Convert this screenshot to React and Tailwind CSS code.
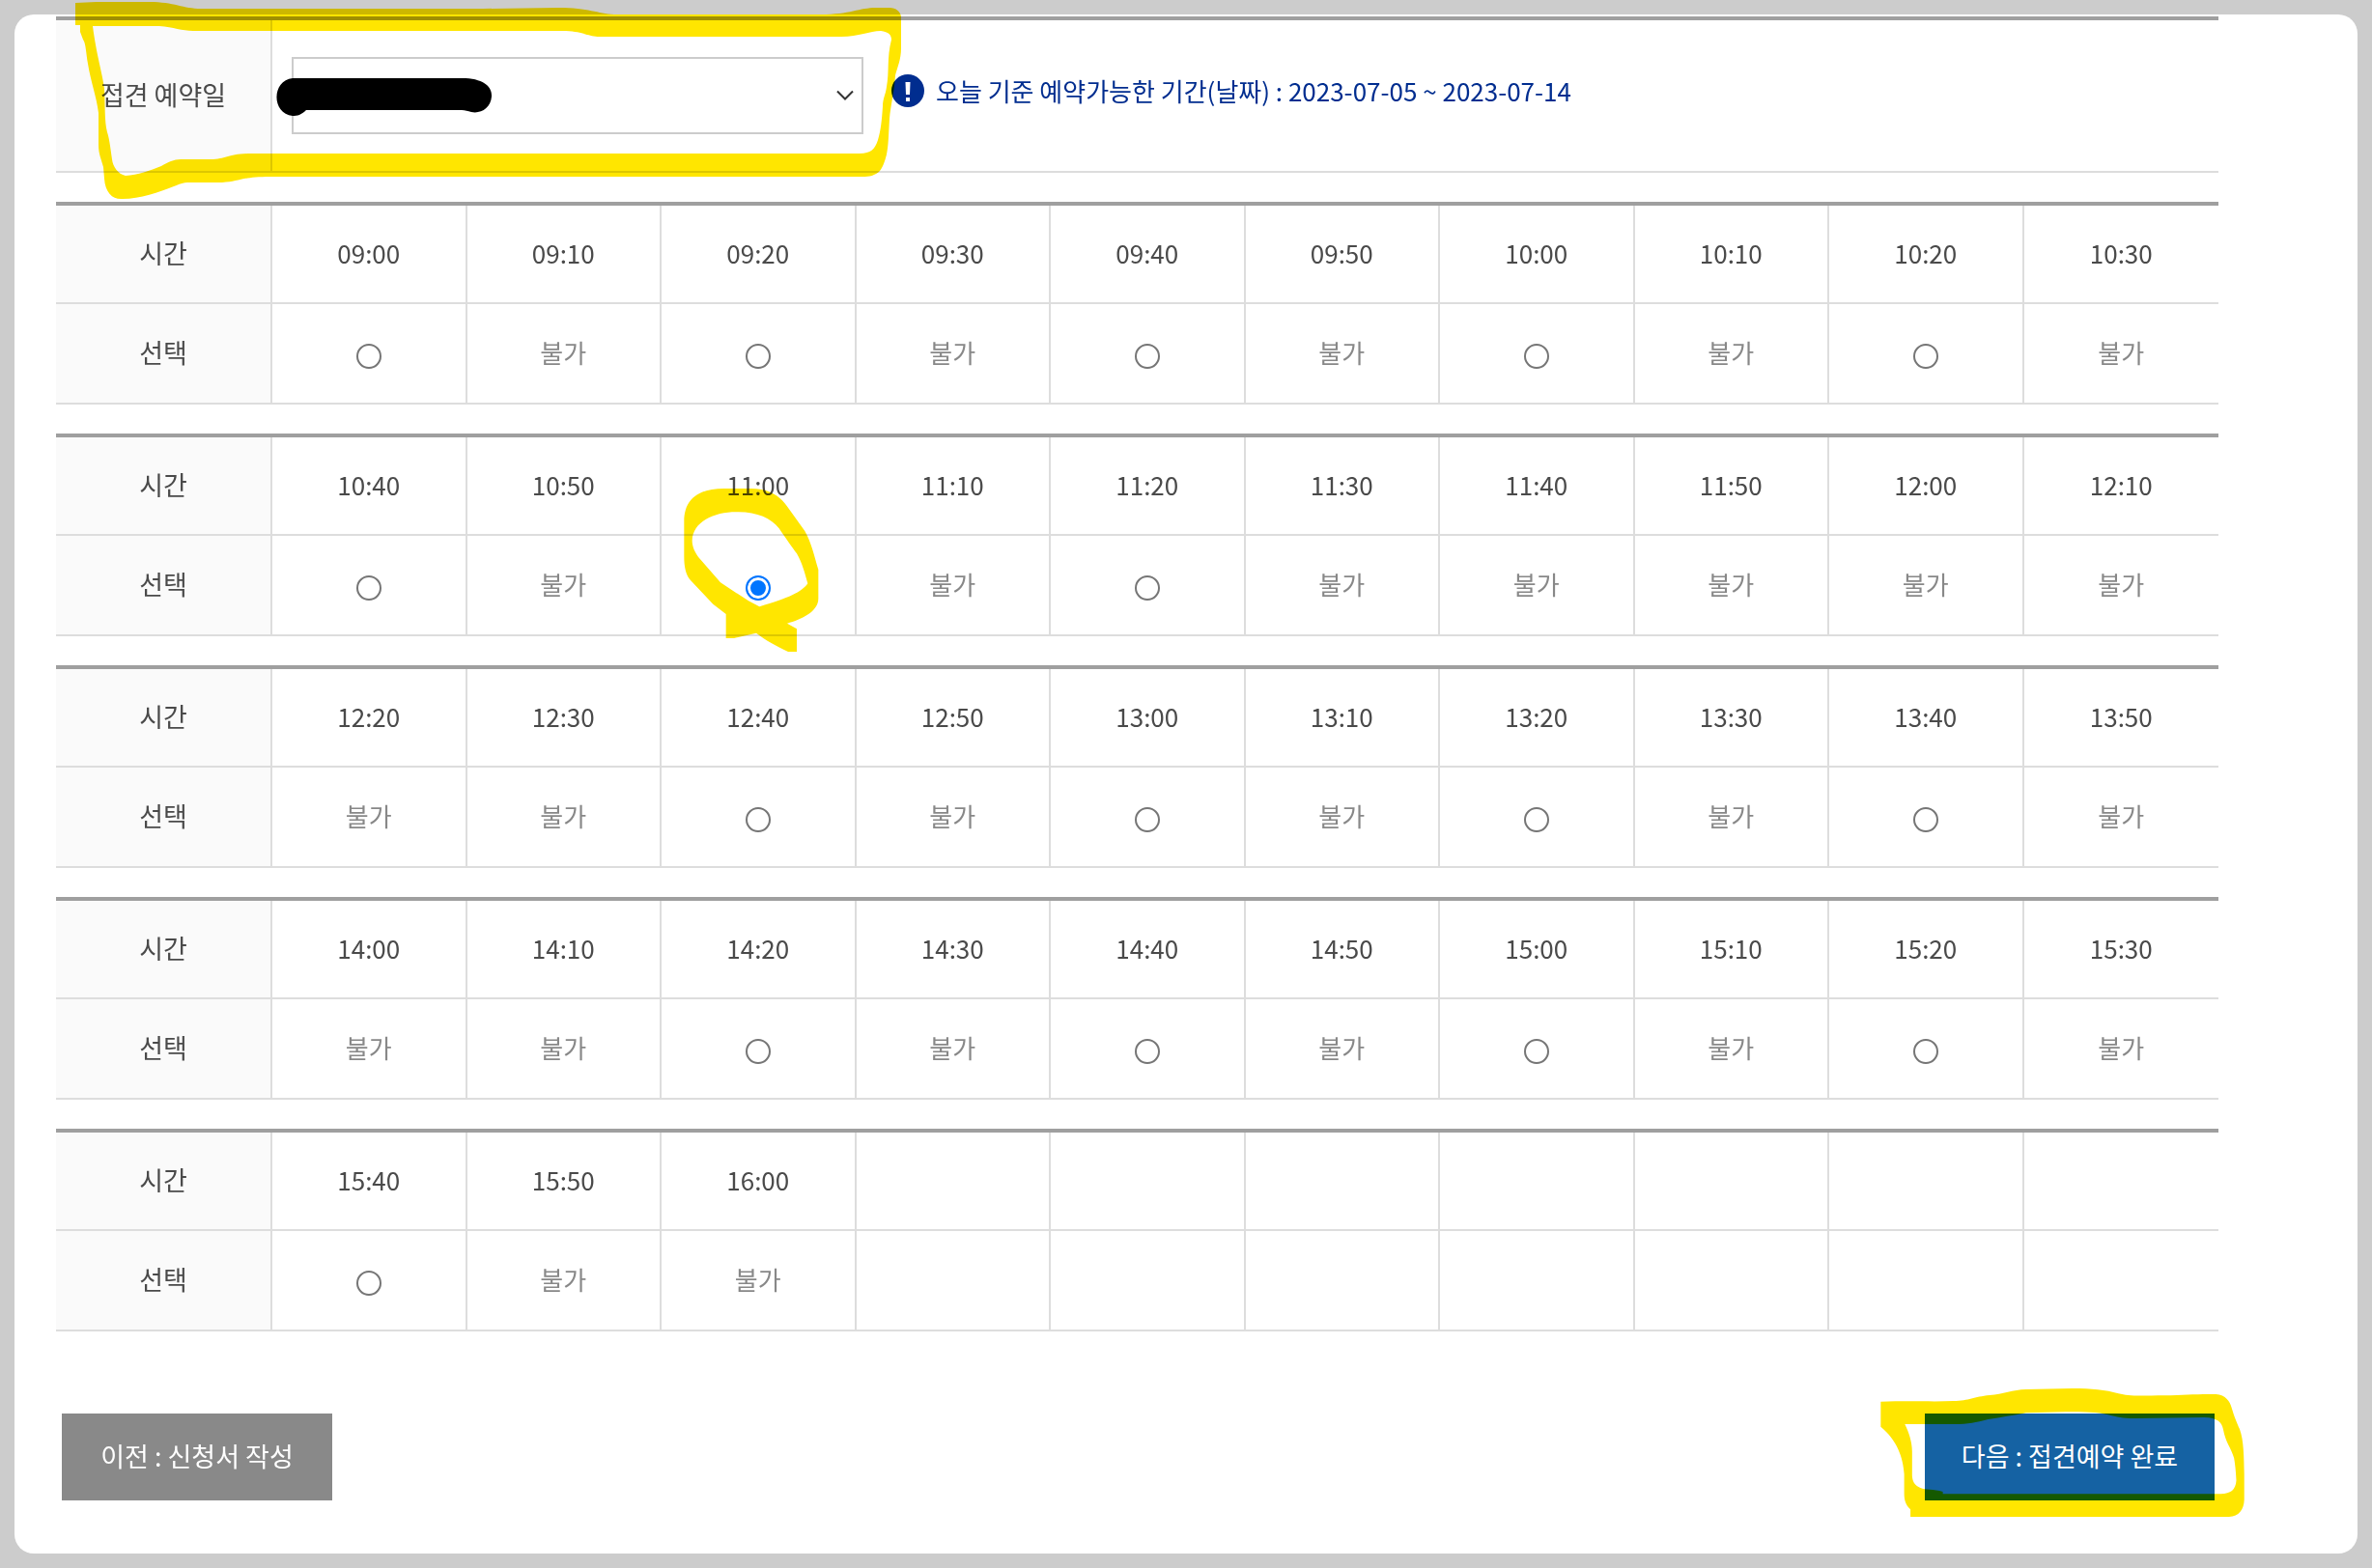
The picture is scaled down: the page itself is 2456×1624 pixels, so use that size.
import React, { useState } from 'react';

// Each group is one table: [time, can be booked]
const timeGroups = [
    [
        ['09:00', true], ['09:10', false], ['09:20', true], ['09:30', false], ['09:40', true],
        ['09:50', false], ['10:00', true], ['10:10', false], ['10:20', true], ['10:30', false],
    ],
    [
        ['10:40', true], ['10:50', false], ['11:00', true], ['11:10', false], ['11:20', true],
        ['11:30', false], ['11:40', false], ['11:50', false], ['12:00', false], ['12:10', false],
    ],
    [
        ['12:20', false], ['12:30', false], ['12:40', true], ['12:50', false], ['13:00', true],
        ['13:10', false], ['13:20', true], ['13:30', false], ['13:40', true], ['13:50', false],
    ],
    [
        ['14:00', false], ['14:10', false], ['14:20', true], ['14:30', false], ['14:40', true],
        ['14:50', false], ['15:00', true], ['15:10', false], ['15:20', true], ['15:30', false],
    ],
    [
        ['15:40', true], ['15:50', false], ['16:00', false],
        null, null, null, null, null, null, null,
    ],
];

const dates = ['2023-07-05', '2023-07-06', '2023-07-07', '2023-07-10', '2023-07-11', '2023-07-12', '2023-07-13', '2023-07-14'];

const MARKED_TIME = '11:00';

// Yellow marker strokes
const DateMarker = () => (
    <svg
        viewBox="70 0 870 210"
        aria-hidden="true"
        className="absolute left-3 -top-[17px] w-[870px] h-[210px] max-w-none mix-blend-multiply pointer-events-none"
    >
        <path
            fill="#ffe600"
            fillRule="evenodd"
            d="M78 3 L100 2 H155 C180 2 190 9 208 9 L500 9 L578 8 C610 8 618 14 636 15 H850 C880 15 890 8 907 8 H921 C928 8 932 12 933 17 V50 C933 62 929 70 927 78 C926 95 922 110 921 123 C920 140 920 150 918 160 C916 168 914 173 911 177 C906 182 900 183 893 183 H280 C250 183 248 188 230 189 H197 C188 189 186 191 180 193 C165 199 145 206 127 206 C117 207 109 200 108 185 L107 173 C105 165 102 160 102 150 V117 C100 100 94 85 91 66 C89 55 89 45 86 41 L83 33 V26 H78 Z
               M96 27 H165 C180 28 188 32 200 32 H586 C605 33 609 38 621 38 H871 C890 38 900 32 912 32 C920 33 923 36 923 41 C918 60 921 75 918 90 C917 98 914 102 914 110 C913 125 912 135 909 145 C906 154 902 159 890 159 H260 C235 159 235 165 218 165 H187 C180 165 174 168 167 172 C155 177 143 181 130 182 C122 180 117 173 116 165 C114 150 113 143 111 137 C108 125 109 110 108 92 C106 75 100 58 96 27 Z"
        />
    </svg>
);

const TimeMarker = () => (
    <svg
        viewBox="0 0 720 690"
        aria-hidden="true"
        className="absolute -left-[25px] -top-[85px] w-[240px] h-[230px] max-w-none mix-blend-multiply pointer-events-none"
    >
        <path
            fill="#ffe600"
            fillRule="evenodd"
            d="M145 210 C145 140 190 108 270 108 H350 C420 108 450 140 470 170 L520 240 C540 275 550 320 562 360 V450 C562 490 510 515 465 527 L495 544 V615 H468 C430 597 400 580 369 557 L300 573 H275 V498 L235 467 L165 393 C150 375 145 350 145 320 Z
               M170 270 C172 210 240 180 310 181 C370 180 415 200 440 232 C460 262 480 290 495 310 C512 340 520 370 529 403 C510 430 470 448 379 475 L345 457 L258 400 L190 322 C180 308 170 290 170 270 Z"
        />
    </svg>
);

const NextMarker = () => (
    <svg
        viewBox="0 0 1568 612"
        preserveAspectRatio="none"
        aria-hidden="true"
        className="absolute -left-[73px] -top-11 w-[536px] h-[204px] max-w-none mix-blend-multiply pointer-events-none"
    >
        <path
            fill="#ffe600"
            fillRule="evenodd"
            d="M80 95 C180 92 240 96 300 93 C350 92 360 80 410 75 C450 72 480 58 520 57 L660 54 C720 54 760 58 800 70 C830 78 850 77 940 76 C1000 74 1040 71 1095 72 C1125 74 1138 95 1143 115 C1150 140 1160 165 1167 180 C1180 215 1180 270 1181 320 V400 C1180 430 1165 453 1135 453 H170 V430 C155 415 151 400 151 380 V320 C148 270 130 215 80 173 Z
               M153 165 H300 C350 165 365 160 405 150 C445 144 480 138 520 130 L640 127 C700 127 740 128 765 135 C800 143 810 147 850 147 L1060 144 C1100 145 1113 160 1117 180 C1125 225 1140 235 1150 270 C1155 300 1156 320 1157 340 C1155 370 1140 381 1110 382 H268 V375 C240 366 215 370 200 363 C180 355 176 340 175 325 V250 C175 220 165 190 153 165 Z"
        />
    </svg>
);

const DateRow = () => {
    const [date, setDate] = useState('');

    return (
        <div className="relative">
            <table className="w-full table-fixed border-separate border-spacing-0 border-t-4 border-[#9f9f9f]">
                <tbody>
                    <tr className="h-[158px]">
                        <th scope="row" className="w-[224px] bg-[#fafafa] border-r-2 border-b-2 border-[#ddd] pb-0.5 text-[27px] font-normal">
                            <label htmlFor="visitDate">접견 예약일</label>
                        </th>
                        <td className="border-b-2 border-[#ddd] pl-5">
                            <div className="flex items-center">
                                <div className="relative w-[592px]">
                                    <select
                                        id="visitDate"
                                        value={date}
                                        onChange={(e) => setDate(e.target.value)}
                                        className="block w-full h-20 px-4 appearance-none border-2 border-[#ccc] bg-white"
                                    >
                                        <option value=""></option>
                                        {dates.map((d) => (
                                            <option key={d} value={d}>{d}</option>
                                        ))}
                                    </select>
                                    <svg
                                        viewBox="0 0 18 12"
                                        aria-hidden="true"
                                        className="absolute right-[10px] top-[34px] w-[18px] h-3 pointer-events-none"
                                    >
                                        <path d="M1 1.5 L9 9.5 L17 1.5" fill="none" stroke="#333" strokeWidth="2" />
                                    </svg>
                                    {/* Blacked-out value */}
                                    <svg
                                        viewBox="280 76 240 48"
                                        aria-hidden="true"
                                        className="absolute -left-[22px] top-[17px] w-[240px] h-12 max-w-none pointer-events-none"
                                    >
                                        <path d="M303 81 H482 C502 82 510 91 509 100 C508 112 498 118 488 116 C484 115 482 114 478 114 H317 C312 119 308 120 303 120 C281 118 281 83 303 81 Z" />
                                    </svg>
                                </div>
                                <p className="flex items-center gap-3 ml-[29px] pb-[10px] text-[#002d8f]">
                                    <svg viewBox="0 0 34 34" aria-hidden="true" className="w-[34px] h-[34px]">
                                        <circle cx="17" cy="17" r="17" fill="#002d8f" />
                                        <path d="M14.5 8 H19.5 L19 21 H15 Z M15 24 H19 V28 H15 Z" fill="#fff" />
                                    </svg>
                                    오늘 기준 예약가능한 기간(날짜) : 2023-07-05 ~ 2023-07-14
                                </p>
                            </div>
                        </td>
                    </tr>
                </tbody>
            </table>
            <DateMarker />
        </div>
    );
};

const TimeTable = ({ slots, selected, onSelect }) => (
    <table className="w-full table-fixed border-separate border-spacing-0 border-t-4 border-[#9f9f9f] text-center">
        <tbody>
            <tr className="h-[102px]">
                <th scope="row" className="w-[224px] bg-[#fafafa] border-r-2 border-b-2 border-[#ddd] pb-0.5 text-[27px] font-normal">시간</th>
                {slots.map((slot, i) => (
                    <td key={i} className="border-r-2 border-b-2 border-[#ddd] pb-0.5 last:border-r-0">
                        {slot && slot[0]}
                    </td>
                ))}
            </tr>
            <tr className="h-[104px]">
                <th scope="row" className="bg-[#fafafa] border-r-2 border-b-2 border-[#ddd] pb-0.5 text-[27px] font-normal">선택</th>
                {slots.map((slot, i) => (
                    <td key={i} className="relative border-r-2 border-b-2 border-[#ddd] pb-0.5 last:border-r-0 text-[#888]">
                        {slot && !slot[1] && '불가'}
                        {slot && slot[1] && (
                            <input
                                type="radio"
                                name="visitTime"
                                aria-label={slot[0]}
                                checked={selected === slot[0]}
                                onChange={() => onSelect(slot[0])}
                                className="block mx-auto mt-2 size-[26px] appearance-none rounded-full border-2 border-[#767676] bg-white checked:border-[#0075ff] checked:bg-[#0075ff] checked:shadow-[inset_0_0_0_3px_white]"
                            />
                        )}
                        {slot && slot[0] === MARKED_TIME && <TimeMarker />}
                    </td>
                ))}
            </tr>
        </tbody>
    </table>
);

const App = () => {
    const [selected, setSelected] = useState(MARKED_TIME);

    return (
        <div className="min-h-screen bg-[#ccc] p-[15px] font-['Noto_Sans_CJK_KR',sans-serif] text-[26px] leading-9 text-[#4a4a4a]">
            <form
                onSubmit={(e) => e.preventDefault()}
                className="rounded-[20px] bg-white pt-[2px] pl-[43px] pr-36 pb-[55px]"
            >
                <div className="flex flex-col gap-[30px]">
                    <DateRow />
                    {timeGroups.map((slots) => (
                        <TimeTable key={slots[0][0]} slots={slots} selected={selected} onSelect={setSelected} />
                    ))}
                </div>

                <div className="flex justify-between mt-[85px] pl-[6px] pr-1">
                    <button type="button" className="w-[280px] h-[90px] bg-[#898989] pb-0.5 text-[27px] text-white">
                        이전 : 신청서 작성
                    </button>
                    <div className="relative">
                        <button type="submit" className="w-[300px] h-[90px] bg-[#1562a3] pb-0.5 text-[27px] text-white">
                            다음 : 접견예약 완료
                        </button>
                        <NextMarker />
                    </div>
                </div>
            </form>
        </div>
    );
};

export default App;
